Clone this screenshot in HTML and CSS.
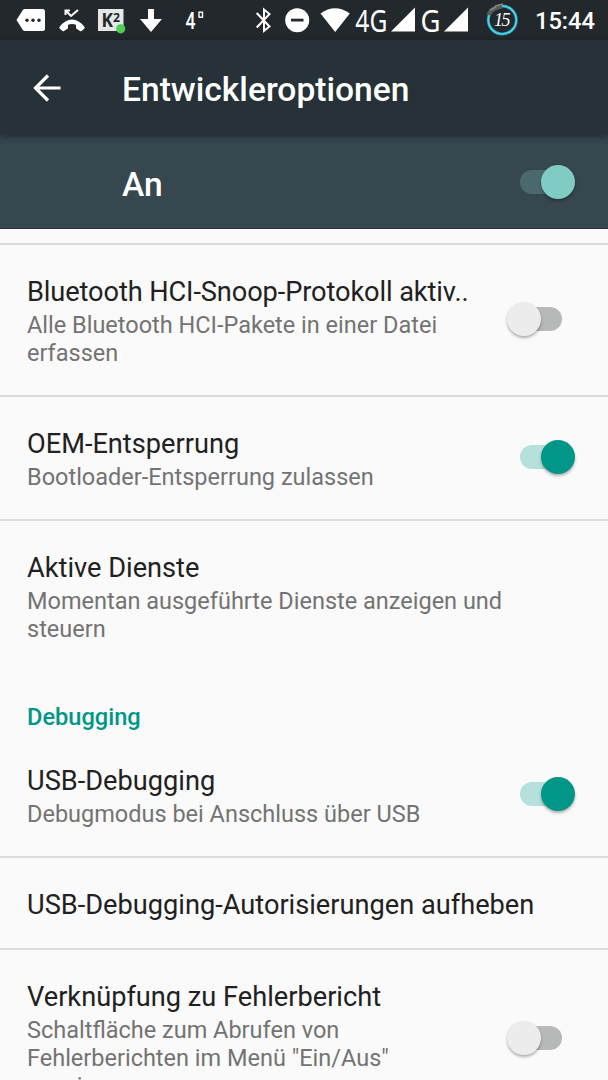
FILE: index.html
```html
<!DOCTYPE html>
<html lang="de">
<head>
    <meta charset="utf-8">
    <title>Entwickleroptionen</title>
    <link rel="stylesheet" href="styles.css">
</head>
<body>
    <!-- Statusleiste -->
    <div class="statusbar">
        <div class="notifications">
            <svg width="29" height="40" viewBox="16 0 29 40">
                <path d="M25 9H42.500Q45 9 45 11.500V28.500Q45 31 42.500 31H25Q23.500 31 22.700 29.800L16.500 20L22.700 10.200Q23.500 9 25 9Z" fill="#fff"/>
                <g fill="#22282c"><circle cx="27" cy="20.300" r="1.700"/><circle cx="33" cy="20.300" r="1.700"/><circle cx="39" cy="20.300" r="1.700"/></g>
            </svg>
            <svg width="26" height="40" viewBox="58 0 26 40">
                <path d="M64.500 15V10.500H69M65 11L70 16L77 10" fill="none" stroke="#fff" stroke-width="2"/>
                <path d="M58.500 27Q64 19.500 71 19.500Q78 19.500 83.500 27Q84 28 83 29L80.500 31Q79.800 31.500 79 31L75.500 28.700Q75 28.300 75 27.500V24.700Q71 23.500 67 24.700V27.500Q67 28.300 66.500 28.700L63 31Q62.200 31.500 61.500 31L59 29Q58 28 58.500 27Z" fill="#fff"/>
            </svg>
            <svg width="28" height="40" viewBox="98 0 28 40">
                <rect x="98" y="9" width="25.500" height="22" fill="#e6e7e7"/>
                <text class="badge-text" x="101.500" y="27" font-size="20" textLength="11.500" lengthAdjust="spacingAndGlyphs">K</text>
                <text class="badge-text" x="113" y="22" font-size="12" textLength="7" lengthAdjust="spacingAndGlyphs">2</text>
                <circle cx="120.700" cy="28.800" r="4.600" fill="#4fd04f"/>
            </svg>
            <svg width="22" height="40" viewBox="141 0 22 40">
                <path d="M149 9H155V19H163L152 32L141 19H149Z" fill="#fff"/>
            </svg>
            <svg width="20" height="40" viewBox="186 0 20 40">
                <text class="temp" x="186.500" y="29" font-size="24" textLength="10" lengthAdjust="spacingAndGlyphs">4</text>
                <rect x="200" y="12.200" width="3.500" height="5" fill="none" stroke="#fff" stroke-width="1.400"/>
            </svg>
        </div>
        <div class="system">
            <svg class="bluetooth" width="16" height="40" viewBox="256 0 16 40">
                <path d="M256.700 13L269.500 26.500L264 31V9.500L269.500 14L256.700 27.500" fill="none" stroke="#fff" stroke-width="2"/>
            </svg>
            <svg class="dnd" width="25" height="40" viewBox="285 0 25 40">
                <circle cx="297.200" cy="20.200" r="12" fill="#fff"/>
                <rect x="291" y="18.700" width="12.500" height="2.800" fill="#22282c"/>
            </svg>
            <svg class="wifi" width="30" height="40" viewBox="320 0 30 40">
                <path d="M320.500 13.500Q335 3 349.800 13.500L335.200 32Z" fill="#fff"/>
            </svg>
            <svg class="net-4g" width="33" height="40" viewBox="355 0 33 40">
                <text class="net" x="355.300" y="31.500" textLength="32" lengthAdjust="spacingAndGlyphs">4G</text>
            </svg>
            <svg class="signal" width="24" height="40" viewBox="0 0 24 40">
                <path d="M24 7.500V31.500H0Z" fill="#fff"/>
            </svg>
            <svg class="net-g" width="20" height="40" viewBox="421 0 20 40">
                <text class="net" x="420.500" y="31.500" textLength="20" lengthAdjust="spacingAndGlyphs">G</text>
            </svg>
            <svg class="signal" width="24" height="40" viewBox="0 0 24 40">
                <path d="M24 7.500V31.500H0Z" fill="#fff"/>
            </svg>
            <svg class="battery" width="34" height="40" viewBox="485 0 34 40">
                <circle cx="502.300" cy="20" r="14" fill="none" stroke="#2596ad" stroke-width="3"/>
                <circle cx="502.300" cy="20" r="14" fill="none" stroke="#55d4e8" stroke-width="1.500"/>
                <path d="M488.500 15Q491 8 502 6" fill="none" stroke="#595b5c" stroke-width="4.500"/>
                <path d="M490 10L496 7M495 6L503 4" stroke="#858585" stroke-width="1.500"/>
                <text class="battery-text" x="494" y="26" textLength="16.500">15</text>
            </svg>
            <span class="clock">15:44</span>
        </div>
    </div>

    <div class="toolbar">
        <svg class="back" width="28" height="28" viewBox="0 0 28 28">
            <path d="M15 1.500L2.500 14L15 26.500M2.500 14H27.500" fill="none" stroke="#fff" stroke-width="3.200"/>
        </svg>
        <h1>Entwickleroptionen</h1>
    </div>

    <div class="master">
        <span>An</span>
        <div class="switch on"><div class="thumb"></div></div>
    </div>

    <!-- Einstellungen -->
    <div class="list">
        <div class="item">
            <div class="text">
                <div class="title long">Bluetooth HCI-Snoop-Protokoll aktiv..</div>
                <div class="summary">Alle Bluetooth HCI-Pakete in einer Datei erfassen</div>
            </div>
            <div class="switch"><div class="thumb"></div></div>
        </div>
        <div class="item">
            <div class="text">
                <div class="title">OEM-Entsperrung</div>
                <div class="summary">Bootloader-Entsperrung zulassen</div>
            </div>
            <div class="switch on"><div class="thumb"></div></div>
        </div>
        <div class="item">
            <div class="text">
                <div class="title">Aktive Dienste</div>
                <div class="summary">Momentan ausgeführte Dienste anzeigen und steuern</div>
            </div>
        </div>
        <h2>Debugging</h2>
        <div class="item first">
            <div class="text">
                <div class="title">USB-Debugging</div>
                <div class="summary">Debugmodus bei Anschluss über USB</div>
            </div>
            <div class="switch on"><div class="thumb"></div></div>
        </div>
        <div class="item">
            <div class="text">
                <div class="title">USB-Debugging-Autorisierungen aufheben</div>
            </div>
        </div>
        <div class="item">
            <div class="text">
                <div class="title">Verknüpfung zu Fehlerbericht</div>
                <div class="summary">Schaltfläche zum Abrufen von Fehlerberichten im Menü "Ein/Aus" anzeigen</div>
            </div>
            <div class="switch"><div class="thumb"></div></div>
        </div>
    </div>
</body>
</html>
```
FILE: styles.css
```css
* {
    box-sizing: border-box;
}

body {
    margin: 0;
    height: 1080px;
    overflow: hidden;
    display: flex;
    flex-direction: column;
    background-color: #fafafa;
    font-family: Roboto, sans-serif;
}

svg {
    display: block;
    flex: none;
    overflow: visible;
}

.statusbar {
    flex: none;
    display: flex;
    justify-content: space-between;
    height: 40px;
    padding: 0 14px 0 16px;
    background-color: #22282c;
    color: #fff;
}

.notifications,
.system {
    display: flex;
}

.notifications {
    gap: 14px;
}

.notifications svg:nth-child(3) {
    margin-left: -1px;
}

.notifications svg:nth-child(5) {
    margin-left: 9px;
}

.badge-text {
    font-family: "Open Sans", sans-serif;
    font-weight: bold;
    fill: #22282c;
}

.temp {
    font-family: Roboto, sans-serif;
    font-weight: 500;
    fill: #fff;
}

.net {
    font-family: "Noto Sans", sans-serif;
    font-size: 30px;
    fill: #fff;
}

.dnd {
    margin-left: 13px;
}

.wifi {
    margin-left: 10px;
}

.net-4g {
    margin: 0 3px 0 5px;
}

.net-g {
    margin: 0 3px 0 6px;
}

.battery {
    margin: 0 16px 0 17px;
}

.battery-text {
    font-family: "Liberation Serif", serif;
    font-style: italic;
    font-size: 18px;
    fill: #fff;
}

.clock {
    width: 59px;
    font-size: 23.6px;
    font-weight: 500;
    line-height: 43px;
    white-space: nowrap;
}

.toolbar {
    flex: none;
    position: relative;
    display: flex;
    align-items: center;
    height: 95px;
    padding: 0 33px;
    background-color: #263238;
    color: #fff;
    box-shadow: 0 2px 7px rgba(0, 0, 0, 0.4);
}

h1 {
    margin: 3px 0 0 61px;
    font-size: 33.6px;
    font-weight: 500;
}

.master {
    flex: none;
    display: flex;
    align-items: center;
    justify-content: space-between;
    height: 94px;
    padding: 0 33px 0 122px;
    background-color: #37474f;
    border-bottom: 1px solid #263238;
    color: #fff;
    font-size: 33.6px;
    font-weight: 500;
}

.master span {
    padding-top: 5px;
}

.list {
    padding-top: 14px;
}

.item {
    display: flex;
    align-items: center;
    padding: 31px 33px 28px 27px;
    border-top: 2px solid #dcdcdc;
}

.item.first {
    border-top: none;
}

.text {
    flex: 1;
    min-width: 0;
}

.title {
    height: 31px;
    line-height: 32px;
    font-size: 27.2px;
    color: #212121;
    white-space: nowrap;
}

.title.long {
    letter-spacing: -0.1px;
}

.summary {
    margin-top: 4px;
    font-size: 23.5px;
    line-height: 28px;
    color: #737373;
}

h2 {
    margin: 0;
    padding: 32px 27px 3px;
    font-size: 23.6px;
    line-height: 28px;
    font-weight: 500;
    color: #009688;
}

.switch {
    position: relative;
    flex: none;
    width: 42px;
    height: 24px;
    margin: 0 13px 5px 58px;
    border-radius: 12px;
    background-color: #b7b9b8;
}

.thumb {
    position: absolute;
    top: -5px;
    left: -13px;
    width: 34px;
    height: 34px;
    border-radius: 50%;
    background-color: #ececec;
    box-shadow: 0 2px 3px rgba(0, 0, 0, 0.3);
}

.switch.on {
    margin-right: 13px;
    background-color: #b6e0dc;
}

.switch.on .thumb {
    left: 21px;
    background-color: #009688;
}

.master .switch {
    margin-bottom: 0;
    background-color: #4b696d;
}

.master .switch .thumb {
    background-color: #80cbc4;
}
```
